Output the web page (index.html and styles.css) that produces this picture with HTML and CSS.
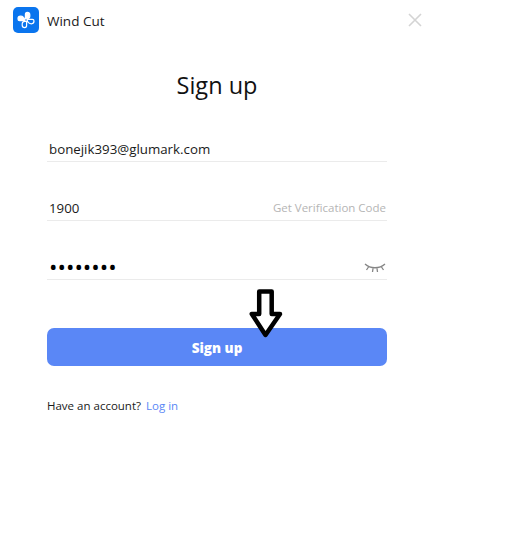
FILE: index.html
```html
<!DOCTYPE html>
<html lang="en">
<head>
<meta charset="utf-8">
<title>Wind Cut</title>
<link rel="stylesheet" href="styles.css">
</head>
<body>
<div class="window">
  <header class="titlebar">
    <div class="brand">
      <span class="logo">
        <svg width="26" height="26" viewBox="0 0 26 26" fill="none" stroke="#fff" stroke-width="1.200" stroke-linejoin="round">
          <path d="M12.400 11.800V7.400c0-1.300.8-2 1.900-2 1.400 0 2.500.9 2.500 2.400v1.400c0 1.600-1.600 2.600-4.400 2.600z" fill="#fff"/>
          <path d="M14.200 12.400h5.200c1 0 1.600.7 1.600 1.700 0 1.500-1 2.700-2.500 2.700-2.300 0-4.300-1.600-4.300-4.400z"/>
          <path d="M13.600 14.200v4.400c0 1.300-.8 2-1.900 2-1.400 0-2.500-.9-2.500-2.400v-1.400c0-1.600 1.600-2.600 4.400-2.600z"/>
          <path d="M11.800 13.600H6.600c-1 0-1.600-.7-1.600-1.700 0-1.500 1-2.700 2.500-2.700 2.300 0 4.300 1.600 4.300 4.400z" fill="#fff"/>
        </svg>
      </span>
      <span class="app-name">Wind Cut</span>
    </div>
    <svg class="close" width="14" height="14" viewBox="0 0 14 14" stroke="#d4d4d4" stroke-width="1.600"><path d="M1 1l12 12M13 1L1 13"/></svg>
  </header>

  <main class="form">
    <h1 class="heading">Sign up</h1>
    <div class="field field-first"><span class="value">bonejik393@glumark.com</span></div>
    <div class="field"><span class="value">1900</span><span class="hint">Get Verification Code</span></div>
    <div class="field">
      <span class="value dots">••••••••</span>
      <svg class="eye" width="22" height="12" viewBox="0 0 22 12" fill="none" stroke="#858585" stroke-width="1.300"><path d="M1 2c5.500 5 14.500 5 20 0M4.500 5L2.500 8M9 6.500L8.500 10M13 6.500L13.500 10M17.500 5l2 3"/></svg>
    </div>
    <button class="submit" type="button"><span class="submit-label">Sign up</span></button>
    <p class="foot"><span>Have an account?</span><a class="link" href="#">Log in</a></p>
  </main>

  <svg class="arrow" width="36" height="52" viewBox="0 0 36 52" fill="#fff" stroke="#000" stroke-width="4.500" stroke-linejoin="round"><path d="M11.200 3.500h12.500V26h8.300L17.500 47 3.800 26h7.400z"/></svg>
</div>
</body>
</html>
```
FILE: styles.css
```css
* { box-sizing: border-box; }
html, body { margin: 0; height: 100%; background: #fff; }
body { font-family: "Open Sans", "Noto Sans", "Liberation Sans", sans-serif; color: #1a1a1a; }
.window { position: relative; width: 519px; height: 536px; overflow: hidden; }
.titlebar { display: flex; justify-content: space-between; align-items: center; width: 435px; padding: 7px 13px 0 13px; height: 33px; }
.brand { display: flex; align-items: center; gap: 8px; }
.logo { display: flex; width: 26px; height: 26px; background: #0a75ee; border-radius: 5px; }
.app-name { font-size: 13.500px; padding-top: 1px; }
.close { display: block; }
.form { width: 340px; margin-left: 47px; display: flex; flex-direction: column; }
.heading { margin: 32px 0 28px; font-size: 23.500px; line-height: 40px; font-weight: 400; text-align: center; color: #111; }
.field { display: flex; align-items: flex-end; justify-content: space-between; height: 59px; padding: 30px 0 2px 2px; border-bottom: 1px solid #ebebeb; font-size: 13.300px; }
.field-first { height: 29px; padding-top: 0; }
.value { line-height: 20px; }
.dots { font-size: 22.500px; color: #000; }
.hint { font-size: 11.500px; line-height: 20px; color: #b5b5b5; padding-right: 1px; }
.eye { display: block; margin: 0 1px 3px 0; }
.submit { display: flex; align-items: center; justify-content: center; height: 38px; margin-top: 48px; padding: 2px 0 0; border: 0; border-radius: 7px; background: #5a87f6; color: #fff; font: 800 13.500px "Open Sans", "Noto Sans", sans-serif; }
.foot { display: flex; gap: 5px; margin: 31px 0 0; font-size: 11.500px; line-height: 17px; color: #1a1a1a; }
.link { color: #5a87f6; text-decoration: none; }
.arrow { position: absolute; left: 248px; top: 288px; }
```
